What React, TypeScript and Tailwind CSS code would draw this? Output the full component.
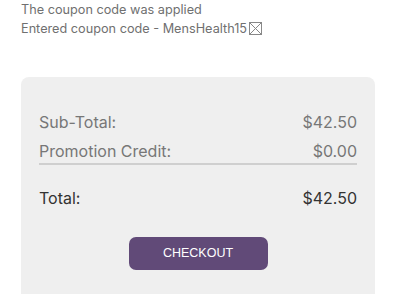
import React from 'react';

export default function App() {
    return (
        <div className="w-[400px] h-[294px] overflow-hidden bg-white font-['Inter',sans-serif]">
            {/* Coupon message */}
            <div className="pl-[21px] text-[12.7px] leading-[19px] text-[#707070]">
                <p>The coupon code was applied</p>
                <p className="flex items-center">
                    Entered coupon code - MensHealth15
                    <svg className="ml-[2px]" width="13" height="13" viewBox="0 0 13 13" fill="none" stroke="#888" strokeWidth="1">
                        <rect x="0.5" y="0.5" width="12" height="12" />
                        <path d="M1 1L12 12M12 1L1 12" />
                    </svg>
                </p>
            </div>

            {/* Summary card */}
            <div className="mt-[39px] ml-[21px] w-[354px] h-[240px] rounded-[8px] bg-[#efefef] px-[18px] pt-[30px]">
                <div className="flex items-center justify-between h-[30px] text-[16px] text-[#777]">
                    <span>Sub-Total:</span>
                    <span>$42.50</span>
                </div>
                <div className="mt-[2px] flex items-center justify-between h-[26px] text-[16px] text-[#777] border-b-2 border-[#cfcfcf]">
                    <span>Promotion Credit:</span>
                    <span>$0.00</span>
                </div>
                <div className="mt-[18px] flex items-center justify-between h-[30px] text-[16px] text-[#333]">
                    <span>Total:</span>
                    <span>$42.50</span>
                </div>
                <div className="mt-[24px] flex justify-center">
                    <button className="w-[139px] h-[33px] rounded-[7px] bg-[#614a78] text-white text-[12.5px] font-['Liberation_Sans',sans-serif]">
                        CHECKOUT
                    </button>
                </div>
            </div>
        </div>
    );
}
